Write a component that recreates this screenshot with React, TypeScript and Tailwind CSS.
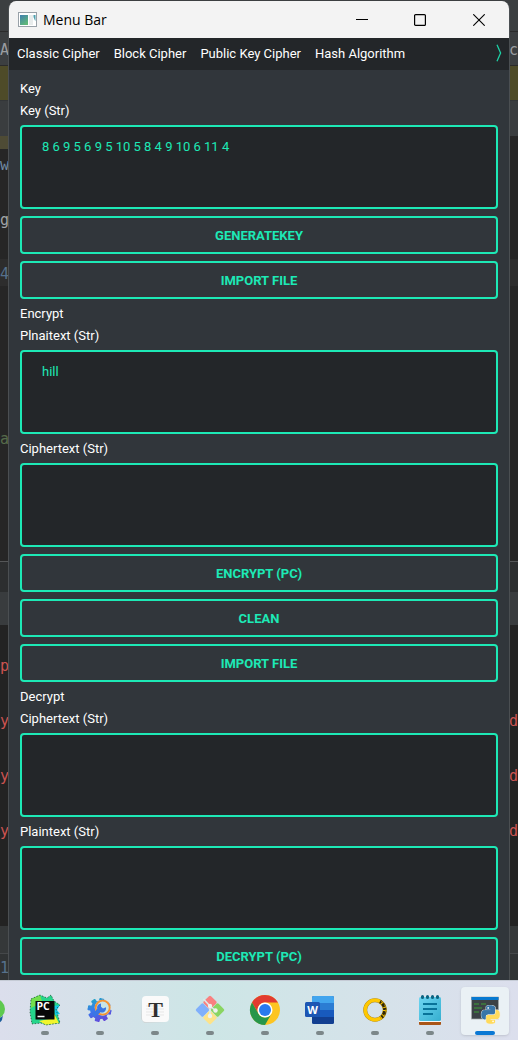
import React, { useState } from 'react';

type StripProps = { className: string; left?: string; right?: string; tone?: string };

const strips: StripProps[] = [
  { className: 'h-8 border-b border-[#2b2b2b] bg-[#3c3f41]' },
  { className: 'h-[34px] border-b border-[#2b2b2b] bg-[#3c3f41]', left: 'A', right: 'c', tone: 'text-[#9a9da0]' },
  { className: 'h-[35px] border-b border-[#333638] bg-[#4e4b28]' },
  { className: 'h-[35px] bg-[#3a3d3f]' },
  { className: 'h-[13px] bg-gradient-to-r from-[#4e4b35] from-[9px] to-[#262626] to-[9px]' },
  { className: 'h-[30px] bg-[#262626]', left: 'w', tone: 'text-[#7189a3]' },
  { className: 'h-20 bg-[#262626]', left: 'g', tone: 'text-[#a0a4a8]' },
  { className: 'h-[27px] bg-[#2d2d2d]', left: '4', tone: 'text-[#56718c]' },
  { className: 'h-[125px] bg-[#262626]' },
  { className: 'h-[54px] bg-[#262626]', left: 'a', tone: 'text-[#566b4b]' },
  { className: 'h-[97px] border-b border-[#555758] bg-[#262626]' },
  { className: 'h-[30px] bg-[#2c2e2f]' },
  { className: 'h-[33px] bg-[#393c3e]' },
  { className: 'h-3 bg-[#232323]' },
  { className: 'h-[55px] bg-[#232323]', left: 'p', tone: 'text-[#cc5452]' },
  { className: 'h-[55px] bg-[#232323]', left: 'y', right: 'd', tone: 'text-[#cc5452]' },
  { className: 'h-[55px] bg-[#232323]', left: 'y', right: 'd', tone: 'text-[#cc5452]' },
  { className: 'h-[55px] bg-[#232323]', left: 'y', right: 'd', tone: 'text-[#cc5452]' },
  { className: 'h-[69px] bg-[#232323]' },
  { className: 'h-7 border-b border-[#45484a] bg-[#353839]' },
  { className: 'h-[26px] bg-[#303334]', left: '1', tone: 'text-[#56718c]' },
];

function Backdrop() {
  return (
    <div className="absolute inset-0 overflow-hidden bg-[#262626]" aria-hidden="true">
      {strips.map((s, i) => (
        <div
          key={i}
          className={`flex items-center justify-between pt-0.5 font-['DejaVu_Sans_Mono',monospace] text-[15px] leading-3 ${s.className} ${s.tone ?? ''}`}
        >
          <span>{s.left}</span>
          <span>{s.right}</span>
        </div>
      ))}
    </div>
  );
}

function TitleBar() {
  return (
    <header className="flex h-[37px] items-center bg-[#f3f3f3] text-black">
      <svg className="ml-[9px] h-[15px] w-[19px]" viewBox="0 0 19 15">
        <defs>
          <linearGradient id="pane" x1="0" y1="0" x2="0.6" y2="1">
            <stop offset="0" stopColor="#3f7fb0" />
            <stop offset="1" stopColor="#5fb878" />
          </linearGradient>
        </defs>
        <rect x=".5" y=".5" width="18" height="14" fill="#fff" stroke="#99a1a8" />
        <rect x="2" y="3" width="8" height="10" fill="url(#pane)" />
        <rect x="11" y="3" width="4" height="10" fill="#e8ecec" />
        <path d="M15.500 3h2v6q-1-1-2-4z" fill="#4f9fae" />
      </svg>
      <h1 className="ml-1.5 flex-1 font-['Open_Sans',sans-serif] text-sm">Menu Bar</h1>
      <button aria-label="Minimize" className="flex h-full w-[58px] items-center justify-center">
        <svg className="size-3" viewBox="0 0 12 12"><path d="M0 5.500h12" stroke="#000" /></svg>
      </button>
      <button aria-label="Maximize" className="flex h-full w-[58px] items-center justify-center">
        <svg className="size-3" viewBox="0 0 12 12"><rect x=".6" y=".6" width="10.800" height="10.800" rx="1" fill="none" stroke="#000" strokeWidth="1.200" /></svg>
      </button>
      <button aria-label="Close" className="flex h-full w-[60px] items-center justify-center">
        <svg className="size-3" viewBox="0 0 12 12"><path d="M.3.3l11.400 11.400M11.700.3L.3 11.700" stroke="#000" strokeWidth="1.100" /></svg>
      </button>
    </header>
  );
}

function MenuBar() {
  return (
    <nav className="flex h-8 items-center gap-3.5 bg-[#232629] pb-0.5 pl-2 pr-[7px] text-white">
      <button>Classic Cipher</button>
      <button>Block Cipher</button>
      <button>Public Key Cipher</button>
      <button>Hash Algorithm</button>
      <button aria-label="More menus" className="ml-auto">
        <svg className="h-[18px] w-1.5" viewBox="0 0 6 18"><path d="M1 .8L4.600 9 1 17.200" fill="none" stroke="#1dd0a4" strokeWidth="1.300" /></svg>
      </button>
    </nav>
  );
}

function Field({ id, label, initial = '' }: { id: string; label: string; initial?: string }) {
  const [value, setValue] = useState(initial);
  return (
    <>
      <label htmlFor={id} className="text-white">{label}</label>
      <textarea
        id={id}
        value={value}
        onChange={(e) => setValue(e.target.value)}
        className="block h-[84px] w-full resize-none rounded border-2 border-[#1de9b6] bg-[#232629] px-5 py-3 text-[#1de9b6] outline-none"
      />
    </>
  );
}

function Action({ children }: { children: React.ReactNode }) {
  return (
    <button className="h-[38px] w-full rounded border-2 border-[#1de9b6] text-center font-bold text-[#1de9b6]">
      {children}
    </button>
  );
}

function PyCharm() {
  return (
    <svg className="size-8" viewBox="0 0 32 32">
      <path d="M2 5l9-4 7 3 4-3 3 6 6 4-4 4 4 14-14 2-5-2-9 1-2-12z" fill="#25d58b" />
      <path d="M2 5l9-4 2 6-5 4-6 3z" fill="#73df4d" />
      <path d="M25 12l6-1-3 5 3 4-5 1z" fill="#16cbe8" />
      <path d="M24 18l6 11-13 2-7-4 15-3z" fill="#f2f52c" />
      <path d="M2 5l9-4 7 3 4-3 3 6 6 4-4 4 4 14-14 2-5-2-9 1-2-12z" fill="none" stroke="#17472d" strokeWidth=".7" strokeDasharray="1.500 1.500" />
      <path d="M6.500 7h19v18.500h-19z" fill="#080808" />
      <text x="7.500" y="16" fontFamily="Open Sans" fontSize="10.500" fontWeight="700" fill="#fff">PC</text>
      <path d="M8.500 22.500h7" stroke="#fff" strokeWidth="1.500" />
    </svg>
  );
}

const teeth = [
  'rotate(0 15.5 16)',
  'rotate(45 15.5 16)',
  'rotate(90 15.5 16)',
  'rotate(135 15.5 16)',
  'rotate(180 15.5 16)',
  'rotate(225 15.5 16)',
  'rotate(270 15.5 16)',
  'rotate(315 15.5 16)',
];

function Settings() {
  return (
    <svg className="size-8" viewBox="0 0 32 32">
      <defs>
        <linearGradient id="gear" x1="0" y1="0" x2=".7" y2="1">
          <stop stopColor="#15bdb0" />
          <stop offset=".5" stopColor="#3b78ed" />
          <stop offset="1" stopColor="#6942d7" />
        </linearGradient>
        <clipPath id="gearShape">
          <circle cx="15.500" cy="16" r="9.300" />
          {teeth.map((t) => (
            <rect key={t} x="13" y="4" width="5" height="24" rx="1" transform={t} />
          ))}
        </clipPath>
      </defs>
      <g transform="rotate(12 15.500 16)">
        <rect x="3" y="3" width="25" height="26" fill="url(#gear)" clipPath="url(#gearShape)" />
      </g>
      <circle cx="18.700" cy="13.700" r="8" fill="#c8e4e6" />
      <circle cx="18.700" cy="13.700" r="7" fill="none" stroke="#f59331" strokeWidth="1.800" />
      <path d="M17 9.500v3.300l2 1.700 3-1.200a4.300 4.300 0 0 1-5.500 5L11 23l-3-3 5.200-5A4.300 4.300 0 0 1 17 9.500z" fill="#3a76e4" />
    </svg>
  );
}

function Typora() {
  return (
    <svg className="size-8" viewBox="0 0 32 32">
      <path d="M3 7l25-3-1 24-22 1-3-4z" fill="#d0d6d7" />
      <rect x="3" y="2" width="27" height="26" rx="4" fill="#fafafa" />
      <path d="M7 12h18M7 15h18M7 18h18M7 21h18" stroke="#dedede" strokeWidth=".7" />
      <text x="16.500" y="22.500" textAnchor="middle" fontFamily="Liberation Serif" fontSize="22" fontWeight="700" fill="#303030">T</text>
    </svg>
  );
}

function Git() {
  return (
    <svg className="size-8" viewBox="0 0 32 32">
      <g transform="rotate(45 16 16)">
        <rect x="5.500" y="5.500" width="10.300" height="10.300" rx="1.500" fill="#f98080" />
        <rect x="16.200" y="5.500" width="10.300" height="10.300" rx="1.500" fill="#8ad562" />
        <rect x="5.500" y="16.200" width="10.300" height="10.300" rx="1.500" fill="#80b0fb" />
        <rect x="16.200" y="16.200" width="10.300" height="10.300" rx="1.500" fill="#fde389" />
      </g>
      <path d="M9.500 5l6.500 7v10M16 12l6 5" fill="none" stroke="#dcebea" strokeWidth="1.600" />
      <circle cx="16" cy="12" r="2.200" fill="#eef2f0" />
      <circle cx="16" cy="22" r="2.200" fill="#eef2f0" />
      <circle cx="21.500" cy="16.500" r="2.200" fill="#eef2f0" />
    </svg>
  );
}

function Chrome() {
  return (
    <svg className="size-8" viewBox="0 0 32 32">
      <circle cx="16" cy="16" r="15" fill="#fdc521" />
      <path d="M3 8.500A15 15 0 0 1 29 8.500H16a7.500 7.500 0 0 0-6.500 11.250z" fill="#e23b30" />
      <path d="M3 8.500A15 15 0 0 0 16 31l6.500-11.250a7.500 7.500 0 0 1-13 0z" fill="#27964a" />
      <circle cx="16" cy="16" r="7.500" fill="#fff" />
      <circle cx="16" cy="16" r="6" fill="#2979ee" />
    </svg>
  );
}

function Word() {
  return (
    <svg className="size-8" viewBox="0 0 32 32">
      <rect x="8" y="2" width="22" height="28" rx="1.500" fill="#123f91" />
      <path d="M8 3.500Q8 2 9.500 2h19Q30 2 30 3.500V9H8z" fill="#42a5ee" />
      <path d="M8 9h22v7H8z" fill="#2b7cd3" />
      <path d="M8 16h22v7H8z" fill="#185abd" />
      <rect x="1" y="8" width="15" height="15" rx="1.500" fill="#1d56b3" />
      <text x="8.500" y="19.500" textAnchor="middle" fontFamily="Open Sans" fontSize="11" fontWeight="700" fill="#fff">W</text>
    </svg>
  );
}

function Ring() {
  return (
    <svg className="size-8" viewBox="0 0 32 32">
      <circle cx="16" cy="16" r="9.800" fill="none" stroke="#a48526" strokeWidth="4" />
      <circle cx="16" cy="16" r="9.800" fill="none" stroke="#ffc800" strokeWidth="3.300" />
      <path d="M21 7.500A9.800 9.800 0 0 1 21.500 24" fill="none" stroke="#2e260b" strokeWidth="3.300" strokeDasharray="2 1.200 4 .8" />
      <path d="M22 7a10.500 10.500 0 0 1 1 17" fill="none" stroke="#b58f08" strokeWidth="1" strokeDasharray="3 2" />
    </svg>
  );
}

function Notepad() {
  return (
    <svg className="size-8" viewBox="0 0 32 32">
      <defs>
        <linearGradient id="pad" x1="0" y1="0" x2="1" y2="1">
          <stop stopColor="#6dd5f1" />
          <stop offset="1" stopColor="#36afd0" />
        </linearGradient>
      </defs>
      <rect x="5" y="25" width="22" height="6" rx="1" fill="#a95518" />
      <path d="M5 26h22v2H5z" fill="#f7f7f7" />
      <rect x="5" y="3" width="22" height="24" rx="1.500" fill="url(#pad)" />
      <path d="M9 10h14M9 15h14M9 20h10" stroke="#087399" strokeWidth="2" />
      <path d="M8.500 2.500v1M13.500 2.500v1M18.500 2.500v1M23.500 2.500v1" stroke="#0b6380" strokeWidth="3" strokeLinecap="round" />
    </svg>
  );
}

const snake =
  'M14.250.18l.9.2.73.26.59.3.45.32.34.34.25.34.16.33.1.3.04.26.02.2-.01.13V8.500l-.05.63-.13.55-.21.46-.26.38-.3.31-.33.25-.35.19-.35.14-.33.1-.3.07-.26.04-.21.02H8.770l-.69.05-.59.14-.5.22-.41.27-.33.32-.27.35-.2.36-.15.37-.1.35-.07.32-.04.27-.02.21v3.060H3.170l-.21-.03-.28-.07-.32-.12-.35-.18-.36-.26-.36-.36-.35-.46-.32-.59-.28-.73-.21-.88-.14-1.050-.05-1.230.06-1.220.16-1.040.24-.87.32-.71.36-.57.4-.44.42-.33.42-.24.4-.16.36-.1.32-.05.24-.01h.16l.06.01h8.160v-.83H6.180l-.01-2.750-.02-.37.05-.34.11-.31.17-.28.25-.26.31-.23.38-.2.44-.18.51-.15.58-.12.64-.1.71-.06.77-.04.84-.02 1.270.05z';

function PythonConsole() {
  return (
    <svg className="size-8" viewBox="0 0 32 32">
      <rect x="2.500" y="3" width="27" height="22" fill="#3c4145" stroke="#a7abad" strokeWidth=".7" />
      <path d="M2.500 3h27v3h-27z" fill="#0879d0" />
      <path d="M5 10h5M5 14h8M5 18h5M12 10h5" stroke="#3c803b" strokeWidth="1.300" />
      <g transform="translate(12.500 11.500) scale(.76)">
        <path d={snake} fill="#3875a8" stroke="#e4e9ec" strokeWidth="1.600" paintOrder="stroke" />
        <path d={snake} fill="#ffda5b" stroke="#f1eee1" strokeWidth="1.600" paintOrder="stroke" transform="rotate(180 12 12)" />
        <path d={snake} fill="#3875a8" />
        <circle cx="8.800" cy="3.200" r="1.100" fill="#fff" />
        <circle cx="15.200" cy="20.800" r="1.100" fill="#fff" />
      </g>
    </svg>
  );
}

const apps: { name: string; icon: React.ReactNode; active?: boolean }[] = [
  { name: 'PyCharm', icon: <PyCharm /> },
  { name: 'Settings', icon: <Settings /> },
  { name: 'Typora', icon: <Typora /> },
  { name: 'Git', icon: <Git /> },
  { name: 'Chrome', icon: <Chrome /> },
  { name: 'Word', icon: <Word /> },
  { name: 'Ring', icon: <Ring /> },
  { name: 'Notepad', icon: <Notepad /> },
  { name: 'Python', icon: <PythonConsole />, active: true },
];

function Taskbar() {
  return (
    <footer className="flex h-[60px] items-center overflow-hidden border-t border-[#c5cbd5] bg-gradient-to-r from-[#dbdeec] via-[#cde6e6] via-40% to-[#dcdfed]">
      <button aria-label="Edge" className="h-8 w-[17px] shrink-0">
        <svg className="h-8 w-[17px]" viewBox="0 0 17 32">
          <circle cx="-5" cy="14" r="10" fill="#5ec94f" />
          <path d="M-2 23q4 0 5-3l-1 5q-2 3-6 4z" fill="#1b5d9b" />
        </svg>
      </button>
      {apps.map((app) => (
        <button key={app.name} aria-label={app.name} className="flex w-[55px] shrink-0 justify-center">
          <span className={`flex h-12 w-12 flex-col items-center justify-between rounded pt-[7px] ${app.active ? 'bg-[#eaf1f5] shadow-sm' : ''}`}>
            {app.icon}
            <span className={`h-1 rounded-full ${app.active ? 'w-5 bg-[#0a78d4]' : 'w-2 bg-[#7c8789]'}`} />
          </span>
        </button>
      ))}
    </footer>
  );
}

export default function App() {
  return (
    <div className="flex min-h-screen flex-col font-['Roboto',sans-serif] text-[13px] leading-[15px]">
      <div className="relative flex-1 px-2 pt-px">
        <Backdrop />
        <div className="relative flex h-full flex-col overflow-hidden rounded-t-lg border-x border-[#4b4f52] bg-[#31363b]">
          <TitleBar />
          <MenuBar />
          <main className="flex flex-col gap-[7px] px-[11px] pb-[5px] pt-[11px]">
            <h2 className="text-white">Key</h2>
            <Field id="key" label="Key (Str)" initial="8 6 9 5 6 9 5 10 5 8 4 9 10 6 11 4" />
            <Action>GENERATEKEY</Action>
            <Action>IMPORT FILE</Action>
            <h2 className="text-white">Encrypt</h2>
            <Field id="encrypt-plain" label="Plnaitext (Str)" initial="hill" />
            <Field id="encrypt-cipher" label="Ciphertext (Str)" />
            <Action>ENCRYPT (PC)</Action>
            <Action>CLEAN</Action>
            <Action>IMPORT FILE</Action>
            <h2 className="text-white">Decrypt</h2>
            <Field id="decrypt-cipher" label="Ciphertext (Str)" />
            <Field id="decrypt-plain" label="Plaintext (Str)" />
            <Action>DECRYPT (PC)</Action>
          </main>
        </div>
      </div>
      <Taskbar />
    </div>
  );
}
